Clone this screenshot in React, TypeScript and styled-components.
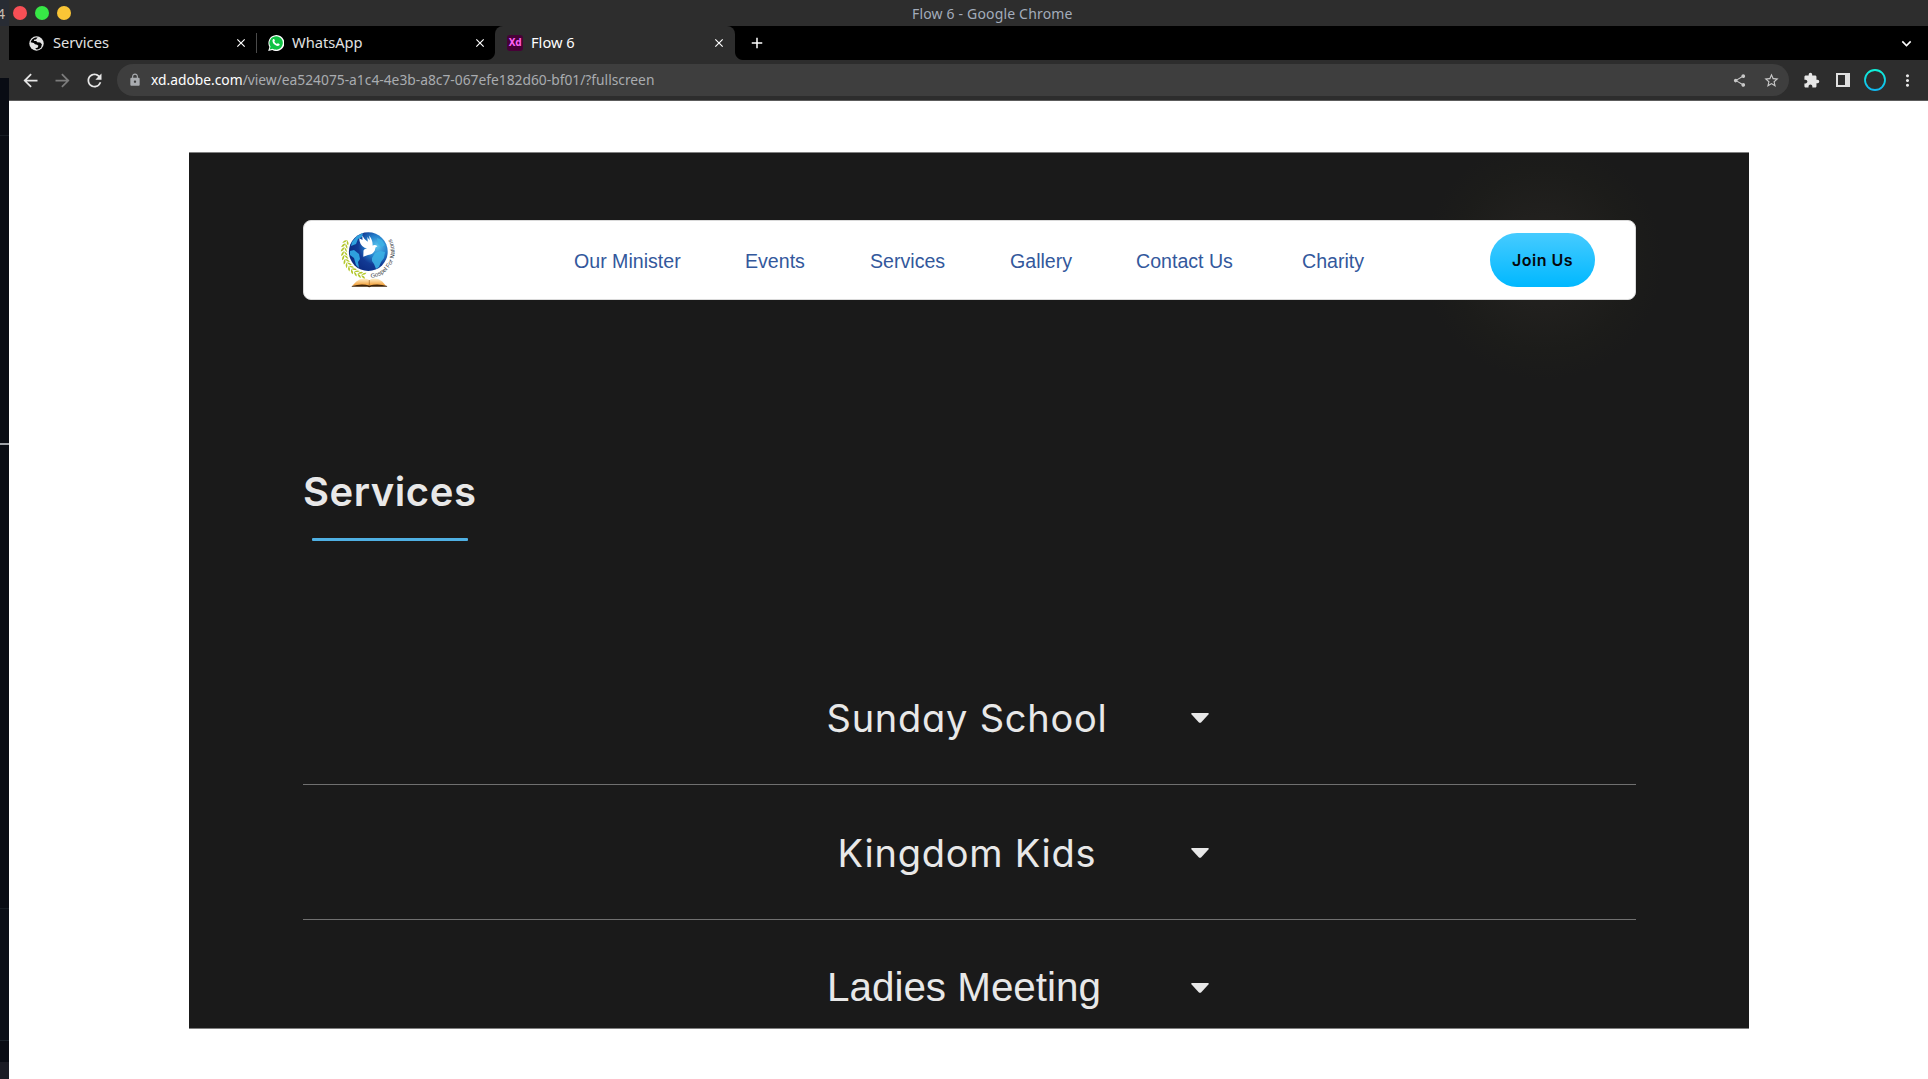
import React from "react";
import styled, { createGlobalStyle } from "styled-components";
import {
  MdArrowBack,
  MdArrowForward,
  MdRefresh,
  MdLock,
  MdShare,
  MdStarBorder,
  MdExtension,
  MdClose,
  MdAdd,
  MdMoreVert,
  MdKeyboardArrowDown,
} from "react-icons/md";

const Global = createGlobalStyle`
  * { box-sizing: border-box; }
  body { margin: 0; background: #fff; overflow: hidden; }
`;

const ui = `"Noto Sans", "Open Sans", sans-serif`;
const geo = `Inter, "Liberation Sans", sans-serif`;
const helv = `"Liberation Sans", Arial, sans-serif`;

const Screen = styled.div`
  display: flex;
  width: 1928px;
  height: 1079px;
  overflow: hidden;
  background: #fff;
  font-family: ${ui};
`;

const Desktop = styled.aside`
  display: flex;
  flex-direction: column;
  width: 9px;
  flex: none;
  overflow: hidden;
`;
const DesktopStripe = styled.div<{ $h: number; $c: string }>`
  height: ${(p) => p.$h}px;
  flex: none;
  background: ${(p) => p.$c};
`;
const DesktopCorner = styled.div`
  display: flex;
  justify-content: flex-end;
  height: 26px;
  flex: none;
  padding-right: 4px;
  background: #282c34;
  color: #c9beb2;
  font-size: 14px;
  line-height: 27px;
`;

const Window = styled.main`
  display: flex;
  flex-direction: column;
  flex: 1;
  min-width: 0;
`;

const TitleBar = styled.header`
  display: flex;
  align-items: center;
  height: 26px;
  padding-left: 4px;
  gap: 8px;
  background: #2d2d2d;
`;
const Light = styled.span<{ $c: string }>`
  width: 14px;
  height: 14px;
  border-radius: 50%;
  background: ${(p) => p.$c};
`;
const WindowTitle = styled.span`
  margin-left: 833px;
  color: #a3acbb;
  font-size: 14px;
  letter-spacing: 0.17px;
  white-space: nowrap;
  line-height: 26px;
  padding-top: 1px;
`;

const TabStrip = styled.div`
  display: flex;
  align-items: center;
  height: 34px;
  background: #000;
`;
const Tab = styled.div<{ $w: number; $pl: number; $pr?: number; $active?: boolean }>`
  position: relative;
  display: flex;
  align-items: center;
  width: ${(p) => p.$w}px;
  height: 34px;
  padding: 0 ${(p) => p.$pr ?? 9}px 0 ${(p) => p.$pl}px;
  color: ${(p) => (p.$active ? "#fff" : "#e2e2e2")};
  font-size: 14.67px;
  background: ${(p) => (p.$active ? "#2d2d2d" : "transparent")};
  border-radius: 8px 8px 0 0;
  ${(p) =>
    p.$active &&
    `
    &::before, &::after {
      content: "";
      position: absolute;
      bottom: 0;
      width: 8px;
      height: 8px;
    }
    &::before { left: -8px; background: radial-gradient(circle at 0 0, transparent 7.5px, #2d2d2d 8.5px); }
    &::after { right: -8px; background: radial-gradient(circle at 100% 0, transparent 7.5px, #2d2d2d 8.5px); }
  `}
`;
const TabLabel = styled.span<{ $gap: number }>`
  flex: 1;
  margin-left: ${(p) => p.$gap}px;
  padding-bottom: 2px;
  line-height: 32px;
`;
const TabRule = styled.span`
  width: 1px;
  height: 20px;
  background: #4a4a4a;
`;
const XdBadge = styled.span`
  width: 16px;
  height: 16px;
  border-radius: 3px;
  background: #470137;
  color: #ff61f6;
  font-weight: 700;
  font-size: 10px;
  line-height: 15px;
  text-align: center;
  letter-spacing: -0.2px;
`;
const StripIcon = styled.span<{ $ml: number }>`
  display: flex;
  margin-left: ${(p) => p.$ml}px;
  color: #fff;
`;

const Toolbar = styled.div`
  display: flex;
  align-items: center;
  height: 41px;
  padding-left: 11px;
  background: #2d2d2d;
  border-bottom: 1px solid #5c5c5c;
  color: #e6e6e6;
`;
const ToolIcon = styled.span<{ $ml?: number; $c?: string }>`
  display: flex;
  flex: none;
  margin-left: ${(p) => p.$ml ?? 0}px;
  color: ${(p) => p.$c ?? "inherit"};
`;
const Omnibox = styled.div`
  display: flex;
  align-items: center;
  width: 1672px;
  height: 32px;
  margin-left: 12px;
  padding: 0 9px 0 11px;
  border-radius: 16px;
  background: #3e3e3e;
  color: #a9acb0;
`;
const Url = styled.span`
  flex: 1;
  margin-left: 9px;
  font-size: 13.8px;
  line-height: 32px;
  white-space: nowrap;
`;
const Host = styled.span`
  color: #fff;
`;

const Page = styled.section`
  flex: 1;
  padding: 51px 0 0 180px;
  background: #fff;
`;
const Artboard = styled.div`
  width: 1560px;
  height: 877px;
  padding: 67px 113px 0 114px;
  overflow: hidden;
  border-top: 1px solid #808080;
  border-bottom: 1px solid #808080;
  background: radial-gradient(circle 120px at 1354px 107px, #25221f 0, #21201e 45px, #1c1c1a 90px, #1a1a1a 120px) #1a1a1a;
`;
const NavBar = styled.nav`
  display: flex;
  align-items: center;
  height: 80px;
  padding: 0 40px 0 31px;
  border-radius: 8px;
  border: 1px solid #dadada;
  background: #fff;
`;
const NavLinks = styled.div`
  display: grid;
  grid-template-columns: 171px 125px 140px 126px 166px 1fr;
  flex: 1;
  margin-left: 173px;
  padding-top: 2px;
  color: #33589c;
  font-family: ${helv};
  font-size: 19.6px;
  line-height: 78px;
  white-space: nowrap;
`;
const JoinButton = styled.button`
  width: 105px;
  height: 54px;
  padding: 0;
  border: 0;
  border-radius: 27px;
  background: linear-gradient(#46cbff, #00b8ff);
  color: #05080c;
  font: 600 16px/54px ${geo};
  letter-spacing: 0.5px;
`;

const Heading = styled.h1`
  margin: 165px 0 0;
  color: #e8e8e8;
  font: 600 40px/54px ${geo};
  letter-spacing: 0.55px;
`;
const Underline = styled.div`
  width: 156px;
  height: 3px;
  margin: 19px 0 0 9px;
  border-radius: 1px;
  background: #4fb0e3;
`;
const ServiceList = styled.div`
  margin-top: 109px;
`;
const ServiceRow = styled.div`
  display: flex;
  align-items: center;
  justify-content: center;
  height: 135px;
  padding: 2px 0 0 87px;
  border-bottom: 1px solid #707070;
`;
const ServiceName = styled.span<{ $plain?: boolean; $track?: number }>`
  width: 300px;
  padding: ${(p) => (p.$plain ? "0 6px 2px 0" : "0 0 0 0")};
  text-align: center;
  color: #e8e8e8;
  font-family: ${(p) => (p.$plain ? helv : geo)};
  font-size: ${(p) => (p.$plain ? 40.4 : 38)}px;
  font-weight: 400;
  font-feature-settings: "cv11" 1;
  letter-spacing: ${(p) => p.$track ?? 0}px;
  white-space: nowrap;
`;
const Caret = styled.svg`
  width: 18px;
  height: 10px;
  margin-left: 74px;
`;

const SiteIcon = () => (
  <svg width="15" height="15" viewBox="0 0 15 15">
    <circle cx="7.500" cy="7.500" r="7.200" fill="#e4e4e4" />
    <path
      d="M8.600 1.500 6.900 3.400H5.400L4.800 4.900H7.300L8.200 6.300 11.200 6.500 12.900 8.300 12.100 11.400 9.600 13.300 7.600 13.600 6.200 12.400 8.800 11.500 9.400 9.700 8.100 8.700 6 8.300 4.800 6.900 1.700 6.200C2.300 3.400 5.200 1.200 8.600 1.500Z"
      fill="#000"
    />
  </svg>
);

const WhatsAppIcon = () => (
  <svg width="16" height="16" viewBox="0 0 16 16">
    <path d="M.2 16 1.4 11.9A8 8 0 1 1 4.3 14.9Z" fill="#fff" />
    <path d="M1.7 14.5 2.5 11.6A6.7 6.7 0 1 1 4.7 13.7Z" fill="#10c344" />
    <path
      d="M5.4 4.1c.3-.2.8-.2.9.1l.6 1.4c.1.3-.5.8-.5 1 .3.9 1.4 2 2.5 2.4.3.1.8-.8 1.1-.7l1.5.7c.4.3 0 1.3-.4 1.6-1 .7-2.500.4-4.200-.8C5.300 8.700 4.400 7 4.500 5.700c0-.7.5-1.300.9-1.600z"
      fill="#fff"
    />
  </svg>
);

const SidePanelIcon = () => (
  <svg width="14" height="14" viewBox="0 0 14 14">
    <path fillRule="evenodd" d="M0 0h14v14H0zM2 2v10h7V2z" fill="#e0e0e0" />
  </svg>
);

const ProfileRing = () => (
  <svg width="22" height="22" viewBox="0 0 22 22">
    <defs>
      <linearGradient id="ring" x1="0" y1="0" x2="0" y2="1">
        <stop offset="0" stopColor="#0ff0d8" />
        <stop offset="1" stopColor="#10b8f0" />
      </linearGradient>
    </defs>
    <circle cx="11" cy="11" r="10" fill="none" stroke="url(#ring)" strokeWidth="1.8" />
  </svg>
);

const leaves = Array.from({ length: 12 }, (_, i) => {
  const angle = 204 - i * 9.3;
  const rad = (angle * Math.PI) / 180;
  return { x: 33.3 + 24.2 * Math.cos(rad), y: 24.7 + 24.2 * Math.sin(rad), turn: angle + 90 };
});

const Logo = () => (
  <svg width="66" height="66" viewBox="0 0 66 66">
    <defs>
      <radialGradient id="sea" cx="0.72" cy="0.36" r="0.78">
        <stop offset="0" stopColor="#5cc6ee" />
        <stop offset="0.35" stopColor="#2480cc" />
        <stop offset="0.62" stopColor="#123a94" />
        <stop offset="1" stopColor="#0a2a80" />
      </radialGradient>
      <linearGradient id="pages" x1="0" y1="0" x2="0" y2="1">
        <stop offset="0" stopColor="#fff0cc" />
        <stop offset="1" stopColor="#f29a2e" />
      </linearGradient>
      <path id="motto" d="M36 50.900A26.300 26.300 0 0 0 54.500 9.200" />
    </defs>
    {leaves.map((l, i) => (
      <g key={i} transform={`translate(${l.x} ${l.y}) rotate(${l.turn})`}>
        <path
          d="M-1.800 0Q-.5-2.600 2-2.700 1.600-.6-1.800 0Q1.500.3 2 2.700-.8 2.500-1.800 0Z"
          transform="rotate(180) scale(1.2)"
          fill="#b3c72c"
        />
      </g>
    ))}
    <circle cx="33.300" cy="24.700" r="19.400" fill="url(#sea)" />
    <path d="M15 24l4-1 5 4 1 5-2 3 1 6-3-3-2-7-4-3zM17 15l5-6 6-3-1 4-4 2-2 5-5 2z" fill="#2ea0de" />
    <path d="M37 31l3-5 5-2 5 1-1 6-3 4-2 5-3 2-2-5-2-3zM42 11l5 2 3 5-3 2-4-3z" fill="#3cb0e4" opacity="0.9" />
    <path
      d="M24.300 11.300Q24.300 18 29.500 20.700L32 21.300Q29.500 21.800 28.500 23.600L28.300 29.700 33 28Q37.800 27.600 39.800 23.500L40.500 20.600 42.400 19.200Q40.300 17 37.500 18.500 38.200 14 34.200 8.500L34.700 13.300 32.300 10 32.800 14.800Q29 12.500 27.300 8.500L27.500 13Z"
      fill="#fff"
    />
    <g transform="translate(.3 -1)">
      <path d="M21 55.500Q27 50.500 34 54Q41 50.500 47 55.500L50.500 59.800H17Z" fill="url(#pages)" />
      <path d="M16.500 60Q26 57.200 34 59.400Q43 57.200 52 60L51.500 60.700H36L34 61.300 32 60.700H16.500Z" fill="#402407" />
      <path d="M34 54v5" stroke="#9a5a16" strokeWidth=".6" />
    </g>
    <text fontFamily="Liberation Sans, sans-serif" fontSize="6" fill="#33363c">
      <textPath href="#motto">Gospel For Nations</textPath>
    </text>
  </svg>
);

const links = ["Our Minister", "Events", "Services", "Gallery", "Contact Us", "Charity"];

const services = [
  { name: "Sunday School", track: 0.75 },
  { name: "Kingdom Kids", track: 0.75 },
  { name: "Ladies Meeting", plain: true },
];

export default function App() {
  return (
    <>
      <Global />
      <Screen>
        <Desktop>
          <DesktopCorner>4</DesktopCorner>
          <DesktopStripe $h={52} $c="#2d2d2d" />
          <DesktopStripe $h={57} $c="#090c14" />
          <DesktopStripe $h={1} $c="#161c24" />
          <DesktopStripe $h={307} $c="#090c14" />
          <DesktopStripe $h={2} $c="#9ea2a8" />
          <DesktopStripe $h={463} $c="#090c14" />
          <DesktopStripe $h={1} $c="#161c24" />
          <DesktopStripe $h={131} $c="#0b0f17" />
          <DesktopStripe $h={1} $c="#1a222b" />
          <DesktopStripe $h={21} $c="#090c14" />
          <DesktopStripe $h={17} $c="#1b1c25" />
        </Desktop>
        <Window>
          <TitleBar>
            <Light $c="#f74f55" />
            <Light $c="#37e746" />
            <Light $c="#fac536" />
            <WindowTitle>Flow 6 - Google Chrome</WindowTitle>
          </TitleBar>
          <TabStrip>
            <Tab $w={247} $pl={20} $pr={8}>
              <SiteIcon />
              <TabLabel $gap={9}>Services</TabLabel>
              <MdClose size={14} color="#fff" />
            </Tab>
            <TabRule />
            <Tab $w={238} $pl={11} $pr={8}>
              <WhatsAppIcon />
              <TabLabel $gap={8}>WhatsApp</TabLabel>
              <MdClose size={14} color="#fff" />
            </Tab>
            <Tab $w={240} $pl={12} $active>
              <XdBadge>Xd</XdBadge>
              <TabLabel $gap={8}>Flow 6</TabLabel>
              <MdClose size={14} color="#fff" />
            </Tab>
            <StripIcon $ml={13}>
              <MdAdd size={18} />
            </StripIcon>
            <StripIcon $ml={1131}>
              <MdKeyboardArrowDown size={19} />
            </StripIcon>
          </TabStrip>
          <Toolbar>
            <ToolIcon>
              <MdArrowBack size={21} />
            </ToolIcon>
            <ToolIcon $ml={11} $c="#7c7c7c">
              <MdArrowForward size={21} />
            </ToolIcon>
            <ToolIcon $ml={11}>
              <MdRefresh size={21} />
            </ToolIcon>
            <Omnibox>
              <MdLock size={14} />
              <Url>
                <Host>xd.adobe.com</Host>/view/ea524075-a1c4-4e3b-a8c7-067efe182d60-bf01/?fullscreen
              </Url>
              <ToolIcon $c="#c8c8c8">
                <MdShare size={15} />
              </ToolIcon>
              <ToolIcon $ml={16} $c="#c8c8c8">
                <MdStarBorder size={17} />
              </ToolIcon>
            </Omnibox>
            <ToolIcon $ml={14}>
              <MdExtension size={17} />
            </ToolIcon>
            <ToolIcon $ml={16}>
              <SidePanelIcon />
            </ToolIcon>
            <ToolIcon $ml={14}>
              <ProfileRing />
            </ToolIcon>
            <ToolIcon $ml={12}>
              <MdMoreVert size={19} />
            </ToolIcon>
          </Toolbar>
          <Page>
            <Artboard>
              <NavBar>
                <Logo />
                <NavLinks>
                  {links.map((l) => (
                    <span key={l}>{l}</span>
                  ))}
                </NavLinks>
                <JoinButton>Join Us</JoinButton>
              </NavBar>
              <Heading>Services</Heading>
              <Underline />
              <ServiceList>
                {services.map((s) => (
                  <ServiceRow key={s.name}>
                    <ServiceName $plain={s.plain} $track={s.track}>
                      {s.name}
                    </ServiceName>
                    <Caret viewBox="0 0 18 10">
                      <path d="M1 0h16q1.400.2.400 1.400L10.300 9.200q-1.300 1.300-2.600 0L.6 1.400Q-.4.200 1 0Z" fill="#e8e8e8" />
                    </Caret>
                  </ServiceRow>
                ))}
              </ServiceList>
            </Artboard>
          </Page>
        </Window>
      </Screen>
    </>
  );
}
